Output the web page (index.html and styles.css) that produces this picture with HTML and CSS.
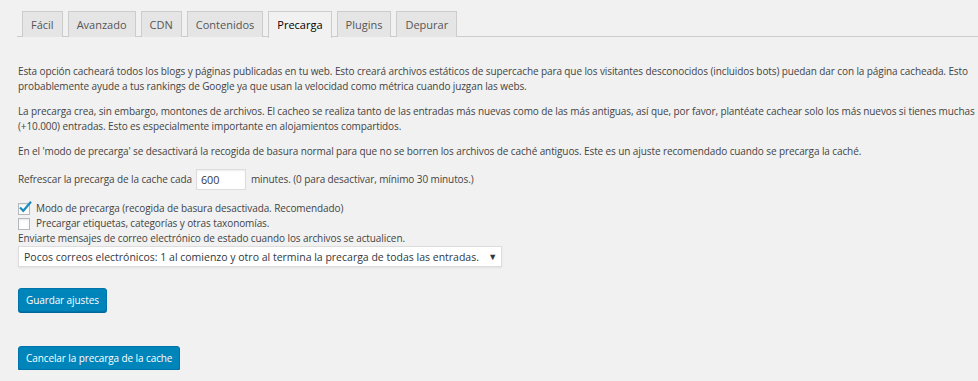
FILE: index.html
```html
<!DOCTYPE html>
<html lang="es">
<head>
  <meta charset="UTF-8">
  <title>WP Super Cache - Precarga</title>
  <link rel="stylesheet" href="styles.css">
</head>
<body>

  <div class="nav-tabs">
    <a class="nav-tab" href="#">Fácil</a>
    <a class="nav-tab" href="#">Avanzado</a>
    <a class="nav-tab" href="#">CDN</a>
    <a class="nav-tab" href="#">Contenidos</a>
    <a class="nav-tab active" href="#">Precarga</a>
    <a class="nav-tab" href="#">Plugins</a>
    <a class="nav-tab" href="#">Depurar</a>
  </div>

  <div class="wrap">
    <p>Esta opción cacheará todos los blogs y páginas publicadas en tu web. Esto creará archivos estáticos de supercache para que los visitantes desconocidos (incluidos bots) puedan dar con la página cacheada. Esto probablemente ayude a tus rankings de Google ya que usan la velocidad como métrica cuando juzgan las webs.</p>
    <p>La precarga crea, sin embargo, montones de archivos. El cacheo se realiza tanto de las entradas más nuevas como de las más antiguas, así que, por favor, plantéate cachear solo los más nuevos si tienes muchas (+10.000) entradas. Esto es especialmente importante en alojamientos compartidos.</p>
    <p>En el 'modo de precarga' se desactivará la recogida de basura normal para que no se borren los archivos de caché antiguos. Este es un ajuste recomendado cuando se precarga la caché.</p>

    <form class="preload-form">
      <div class="refresh-row">
        Refrescar la precarga de la cache cada
        <input class="small-text" type="text" value="600">
        minutes. (0 para desactivar, mínimo 30 minutos.)
      </div>

      <label class="check-row">
        <span class="check">
          <svg class="tick" width="15" height="15" viewBox="0 0 15 15"><path d="M2 7.5 L5.3 10.8 L13 1.8" fill="none" stroke="#1e8cbe" stroke-width="2.2"/></svg>
        </span>
        Modo de precarga (recogida de basura desactivada. Recomendado)
      </label>
      <label class="check-row">
        <span class="check"></span>
        Precargar etiquetas, categorías y otras taxonomías.
      </label>
      <div class="line">Enviarte mensajes de correo electrónico de estado cuando los archivos se actualicen.</div>

      <div class="select-wrap">
        <select class="mail-select">
          <option>Pocos correos electrónicos: 1 al comienzo y otro al termina la precarga de todas las entradas.</option>
        </select>
      </div>

      <div class="actions">
        <button type="button" class="button-primary">Guardar ajustes</button>
      </div>
    </form>

    <div class="actions cancel">
      <button type="button" class="button-primary">Cancelar la precarga de la cache</button>
    </div>
  </div>

</body>
</html>
```

FILE: styles.css
```css
body {
  margin: 0;
  background-color: #f1f1f1;
  color: #444;
  font-family: "Open Sans", sans-serif;
  font-size: 10px;
  line-height: 15px;
  letter-spacing: -0.1px;
}
.nav-tabs {
  display: flex;
  margin: 11px 0 0 17px;
  padding-left: 5px;
  border-bottom: 1px solid #ccc;
}
.nav-tab {
  display: block;
  margin: 0 5px -1px 0;
  padding: 0 8px;
  height: 25px;
  line-height: 25px;
  font-size: 11px;
  letter-spacing: 0;
  color: #555;
  text-decoration: none;
  background-color: #e5e5e5;
  border: 1px solid #ccc;
  border-bottom: none;
}
.nav-tab.active {
  color: #000;
  background-color: #f1f1f1;
  height: 26px;
  margin-bottom: -2px;
}
.wrap {
  padding: 0 0 0 18px;
  width: 960px;
}
p {
  margin: 27px 0 10px;
}
p + p {
  margin-top: 10px;
}
.refresh-row {
  display: flex;
  align-items: center;
  gap: 4px;
  margin-top: 10px;
}
.small-text {
  width: 50px;
  height: 21px;
  box-sizing: border-box;
  padding: 0 4px;
  margin: 0 1px 0 0;
  border: 1px solid #ddd;
  box-shadow: inset 0 1px 2px rgba(0, 0, 0, .07);
  background: #fff;
  color: #32373c;
  font-family: inherit;
  font-size: 10.8px;
}
.check-row {
  display: flex;
  align-items: center;
  gap: 6px;
}
.refresh-row + .check-row {
  margin-top: 11px;
}
.check {
  position: relative;
  width: 12px;
  height: 12px;
  box-sizing: border-box;
  border: 1px solid #b4b9be;
  background: #fff;
  box-shadow: inset 0 1px 2px rgba(0, 0, 0, .1);
}
.tick {
  position: absolute;
  left: -1px;
  top: -4px;
}
.select-wrap {
  position: relative;
  width: 484px;
}
.mail-select {
  display: block;
  appearance: none;
  width: 484px;
  height: 21px;
  padding: 0 14px 0 5px;
  border: 1px solid #ddd;
  box-shadow: 0 1px 2px rgba(0, 0, 0, .07);
  background: #fff;
  color: #32373c;
  font-family: inherit;
  font-size: 10.5px;
  letter-spacing: 0;
}
.select-wrap::after {
  content: "\25BC";
  position: absolute;
  right: 5px;
  top: 3px;
  font-size: 9px;
  color: #32373c;
  pointer-events: none;
}
.actions {
  margin-top: 21px;
}
.actions.cancel {
  margin-top: 34px;
}
.button-primary {
  height: 24px;
  padding: 0 7px;
  border: 1px solid #0073aa;
  border-radius: 3px;
  box-shadow: 0 1px 0 #006799;
  background-color: #0085ba;
  color: #fff;
  font-family: inherit;
  font-size: 10px;
  letter-spacing: -0.1px;
  cursor: pointer;
}
```
